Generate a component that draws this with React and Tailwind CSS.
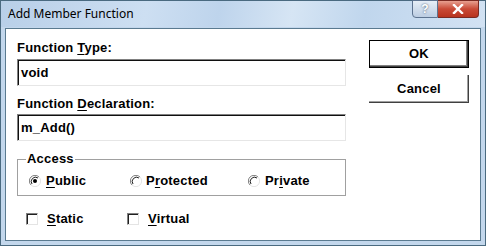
import React from "react";

const dlgFont = { fontFamily: '"Liberation Sans", Arial, sans-serif' };

function U({ children }) {
  return <span className="underline underline-offset-2">{children}</span>;
}

function Radio({ checked }) {
  return (
    <svg width="12" height="12" viewBox="0 0 12 12" className="shrink-0">
      <circle cx="6" cy="6" r="5.5" fill="#fff" />
      <path d="M10 2 A5.5 5.5 0 0 0 2 10" fill="none" stroke="#808080" strokeWidth="1" />
      <path d="M9 3 A4.3 4.3 0 0 0 3 9" fill="none" stroke="#202020" strokeWidth="1" />
      <path d="M2 10 A5.5 5.5 0 0 0 10 2" fill="none" stroke="#e4e4e4" strokeWidth="1" />
      {checked && <circle cx="6" cy="6" r="2" fill="#000" />}
    </svg>
  );
}

function Check() {
  return (
    <span className="block h-[12px] w-[12px] shrink-0 border border-t-[#808080] border-l-[#808080] border-b-[#e4e4e4] border-r-[#e4e4e4] bg-white shadow-[inset_1px_1px_0_#202020]" />
  );
}

function Field({ value }) {
  return (
    <div className="flex h-[27px] w-[329px] items-center border border-t-[#808080] border-l-[#808080] border-b-[#e6e6e6] border-r-[#e6e6e6] bg-white pl-[3px] text-[13px] font-bold text-black shadow-[inset_1px_1px_0_#101010]">
      {value}
    </div>
  );
}

function Btn({ children, def }) {
  return (
    <div
      className={
        "flex h-[28px] w-[100px] items-center justify-center bg-white text-[13px] font-bold tracking-[0.2px] text-black " +
        (def
          ? "border border-black shadow-[inset_-1px_-1px_0_#404040,inset_-2px_-2px_0_#808080]"
          : "shadow-[inset_-1px_-1px_0_#404040,inset_-2px_-2px_0_#a0a0a0]")
      }
    >
      {children}
    </div>
  );
}

export default function App() {
  return (
    <div
      className="flex h-[246px] w-[486px] flex-col border border-[#4a6a80] bg-[#c3d7ec]"
      style={dlgFont}
    >
      {/* title bar */}
      <div className="relative flex h-[26px] shrink-0 items-center bg-[linear-gradient(100deg,#b8cfe8_0%,#cddff2_30%,#bed4ec_45%,#d6e5f4_60%,#c0d6ed_75%,#d2e2f3_100%)] pl-[7px]">
        <span className="text-[12px] text-black" style={{ fontFamily: '"Noto Sans", "Liberation Sans", sans-serif' }}>
          Add Member Function
        </span>
        <div className="absolute right-[6px] top-[-1px] flex">
          <div className="flex h-[18px] w-[26px] items-center justify-center rounded-bl-[4px] border border-[#5d7390] bg-[linear-gradient(#e6eef7,#bccde2)] text-[12px] font-bold text-white [text-shadow:0_0_2px_#3a4a60]">
            ?
          </div>
          <div className="flex h-[18px] w-[41px] items-center justify-center rounded-br-[4px] border border-l-0 border-[#7a2a22] bg-[linear-gradient(#e8a090,#c94a36_50%,#b8341f)]">
            <svg width="12" height="10" viewBox="0 0 12 10">
              <path d="M2 1 L10 9 M10 1 L2 9" stroke="#fff" strokeWidth="2.4" strokeLinecap="square" />
            </svg>
          </div>
        </div>
      </div>

      {/* client area */}
      <div className="mx-[4px] mb-[4px] mt-[1px] flex flex-1 border border-[#5a7a90] bg-white text-black">
        <div className="ml-[11px] flex flex-col pt-[11px] text-[13px] font-bold tracking-[0.2px]">
          <div className="h-[15px] leading-[15px]">
            Function <U>T</U>ype:
          </div>
          <div className="mt-[4px]">
            <Field value="void" />
          </div>
          <div className="mt-[10px] h-[15px] leading-[15px]">
            Function <U>D</U>eclaration:
          </div>
          <div className="mt-[3px]">
            <Field value="m_Add()" />
          </div>

          <fieldset className="mt-[11px] h-[44px] w-[329px] border border-[#a0a0a0] px-[8px] pt-0 shadow-[inset_1px_1px_0_#fff]">
            <legend className="px-[1px] leading-[14px]">Access</legend>
            <div className="mt-[5px] flex items-center">
              <div className="ml-[3px] flex w-[101px] items-center gap-[3px]">
                <Radio checked />
                <span className="ml-[2px]">
                  <U>P</U>ublic
                </span>
              </div>
              <div className="flex w-[118px] items-center gap-[3px]">
                <Radio />
                <span className="ml-[1px]">
                  P<U>r</U>otected
                </span>
              </div>
              <div className="flex items-center gap-[3px]">
                <Radio />
                <span className="ml-[2px]">
                  Pr<U>i</U>vate
                </span>
              </div>
            </div>
          </fieldset>

          <div className="mt-[13px] flex items-center">
            <div className="ml-[9px] flex w-[101px] items-center gap-[9px]">
              <Check />
              <span>
                <U>S</U>tatic
              </span>
            </div>
            <div className="flex items-center gap-[9px]">
              <Check />
              <span>
                <U>V</U>irtual
              </span>
            </div>
          </div>
        </div>

        <div className="ml-[23px] flex flex-col gap-[7px] pt-[11px]">
          <Btn def>OK</Btn>
          <Btn>Cancel</Btn>
        </div>
      </div>
    </div>
  );
}
